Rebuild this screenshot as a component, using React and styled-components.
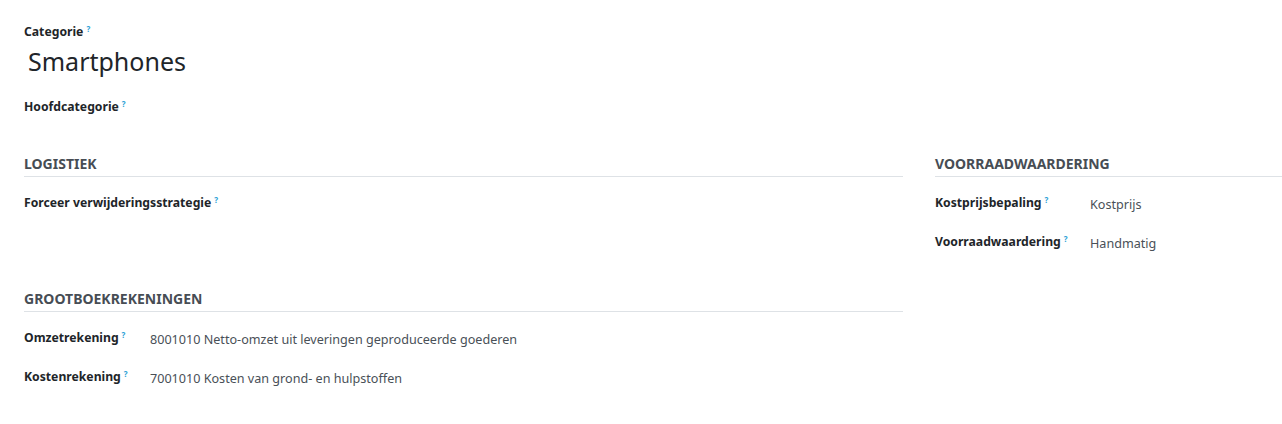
import React from "react";
import styled, { createGlobalStyle } from "styled-components";

const GlobalStyle = createGlobalStyle`
  body {
    margin: 0;
    background: #fff;
    font-family: "Noto Sans", "Open Sans", sans-serif;
    color: #212529;
  }
`;

const Sheet = styled.div`
  padding: 23px 0 0 24px;
`;

const Help = styled.span`
  display: inline-block;
  color: #2a9fd6;
  font-size: 8px;
  font-weight: 700;
  line-height: 0;
  margin-left: 3px;
  vertical-align: top;
  position: relative;
  top: 6px;
`;

const Label = styled.div`
  font-size: 12.2px;
  font-weight: 700;
  color: #212529;
  white-space: nowrap;
  line-height: 18px;
  height: 18px;
`;

const Title = styled.h1`
  margin: 4px 0 0 4px;
  font-size: 25px;
  font-weight: 400;
  color: #212529;
  line-height: 32px;
`;

const ParentRow = styled.div`
  margin-top: 21px;
`;

const Groups = styled.div`
  display: grid;
  grid-template-columns: 879px 1fr;
  column-gap: 32px;
  margin-top: 39px;
`;

const Column = styled.div`
  display: flex;
  flex-direction: column;
`;

const Section = styled.div`
  margin-bottom: ${(p) => p.$after || 0}px;
`;

const Heading = styled.div`
  font-size: 14px;
  font-weight: 700;
  color: #474d54;
  text-transform: uppercase;
  line-height: 18px;
  padding-bottom: 3px;
  border-bottom: 1px solid #dee2e6;
`;

const Field = styled.div`
  display: grid;
  grid-template-columns: ${(p) => p.$labelWidth}px 1fr;
  align-items: start;
  height: 18px;
  margin-top: ${(p) => p.$top}px;
`;

const Value = styled.div`
  font-size: 12.6px;
  line-height: 18px;
  color: #495057;
  position: relative;
  top: 2px;
  white-space: nowrap;
`;

function Row({ label, value, width = 126, top = 21 }) {
  return (
    <Field $labelWidth={width} $top={top}>
      <Label>
        {label}
        <Help>?</Help>
      </Label>
      <Value>{value}</Value>
    </Field>
  );
}

export default function App() {
  return (
    <>
      <GlobalStyle />
      <Sheet>
        <Label>
          Categorie<Help>?</Help>
        </Label>
        <Title>Smartphones</Title>
        <ParentRow>
          <Label>
            Hoofdcategorie<Help>?</Help>
          </Label>
        </ParentRow>
        <Groups>
          <Column>
            <Section $after={78}>
              <Heading>Logistiek</Heading>
              <Row label="Forceer verwijderingsstrategie" value="" width={300} top={17} />
            </Section>
            <Section>
              <Heading>Grootboekrekeningen</Heading>
              <Row label="Omzetrekening" value="8001010 Netto-omzet uit leveringen geproduceerde goederen" top={17} />
              <Row label="Kostenrekening" value="7001010 Kosten van grond- en hulpstoffen" />
            </Section>
          </Column>
          <Column>
            <Section>
              <Heading>Voorraadwaardering</Heading>
              <Row label="Kostprijsbepaling" value="Kostprijs" width={155} top={17} />
              <Row label="Voorraadwaardering" value="Handmatig" width={155} />
            </Section>
          </Column>
        </Groups>
      </Sheet>
    </>
  );
}
